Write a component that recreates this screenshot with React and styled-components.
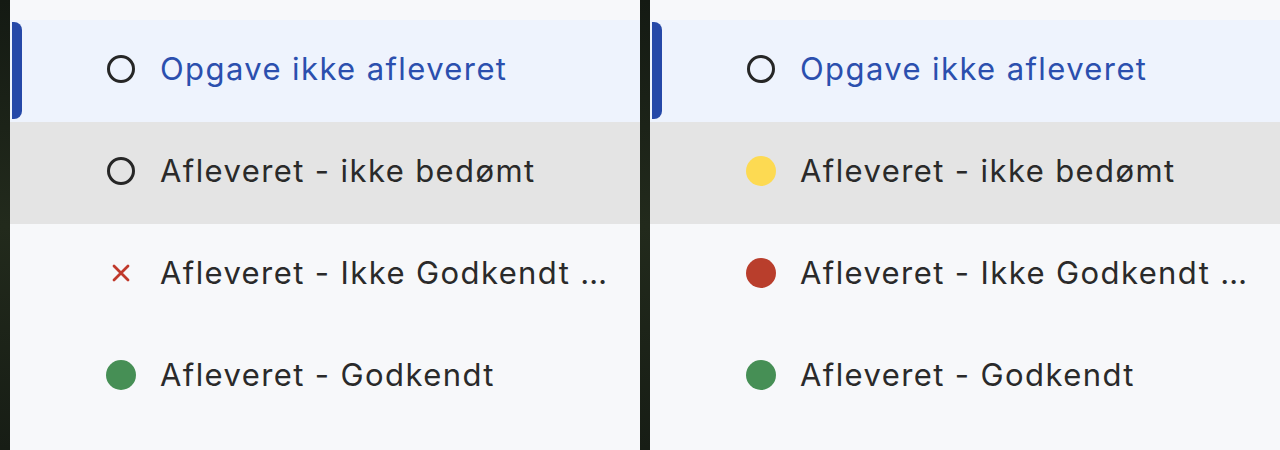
import React from 'react';
import styled, { createGlobalStyle } from 'styled-components';

const GlobalStyle = createGlobalStyle`
  html, body {
    margin: 0;
    padding: 0;
    background: #1b2119;
  }
  body {
    font-family: Inter, "Noto Sans", "Liberation Sans", sans-serif;
    -webkit-font-smoothing: antialiased;
  }
`;

const Screen = styled.div`
  display: flex;
  gap: 10px;
  padding-left: 10px;
  height: 450px;
  overflow: hidden;
  background: linear-gradient(180deg, #141a13 0%, #222a1c 50%, #171d15 100%);
`;

const Panel = styled.div`
  width: 630px;
  flex-shrink: 0;
  background: #f7f8fa;
  padding-top: 20px;
  display: flex;
  flex-direction: column;
`;

const Row = styled.div`
  display: flex;
  align-items: center;
  height: 102px;
  box-sizing: border-box;
  padding-right: 30px;
  background: ${(p) => (p.$active ? '#eef3fd' : p.$hover ? '#e4e4e4' : 'transparent')};
`;

const Indicator = styled.div`
  align-self: stretch;
  width: 10px;
  margin: 2px 0 3px 2px;
  border-radius: 0 8px 8px 0;
  background: ${(p) => (p.$show ? '#2548a8' : 'transparent')};
`;

const IconBox = styled.div`
  width: 30px;
  height: 30px;
  margin-left: 84px;
  margin-right: 24px;
  margin-bottom: 5px;
  display: flex;
  align-items: center;
  justify-content: center;
  flex-shrink: 0;
`;

const Ring = styled.div`
  width: 22px;
  height: 22px;
  border: 3px solid #262626;
  border-radius: 50%;
`;

const Dot = styled.div`
  width: 30px;
  height: 30px;
  border-radius: 50%;
  background: ${(p) => p.$color};
`;

const Label = styled.span`
  font-size: 31px;
  line-height: 1.35;
  letter-spacing: 1.4px;
  margin-bottom: 5px;
  color: ${(p) => (p.$active ? '#2b4fae' : '#2a2a2a')};
  white-space: nowrap;
  overflow: hidden;
  text-overflow: ellipsis;
  min-width: 0;
`;

const Cross = () => (
  <svg width="20" height="20" viewBox="0 0 20 20">
    <path d="M3 3 L17 17 M17 3 L3 17" stroke="#c0392b" strokeWidth="2.8" strokeLinecap="round" />
  </svg>
);

const rowsLeft = [
  { text: 'Opgave ikke afleveret', icon: 'ring', active: true },
  { text: 'Afleveret - ikke bedømt', icon: 'ring', hover: true },
  { text: 'Afleveret - Ikke Godkendt ...', icon: 'cross' },
  { text: 'Afleveret - Godkendt', icon: '#468f55' },
];

const rowsRight = [
  { text: 'Opgave ikke afleveret', icon: 'ring', active: true },
  { text: 'Afleveret - ikke bedømt', icon: '#fdda52', hover: true },
  { text: 'Afleveret - Ikke Godkendt ...', icon: '#b93e2c' },
  { text: 'Afleveret - Godkendt', icon: '#468f55' },
];

const StatusIcon = ({ icon }) => {
  if (icon === 'ring') return <Ring />;
  if (icon === 'cross') return <Cross />;
  return <Dot $color={icon} />;
};

const StatusList = ({ rows }) => (
  <Panel>
    {rows.map((r) => (
      <Row key={r.text} $active={r.active} $hover={r.hover}>
        <Indicator $show={r.active} />
        <IconBox>
          <StatusIcon icon={r.icon} />
        </IconBox>
        <Label $active={r.active}>{r.text}</Label>
      </Row>
    ))}
  </Panel>
);

const App = () => (
  <>
    <GlobalStyle />
    <Screen>
      <StatusList rows={rowsLeft} />
      <StatusList rows={rowsRight} />
    </Screen>
  </>
);

export default App;
